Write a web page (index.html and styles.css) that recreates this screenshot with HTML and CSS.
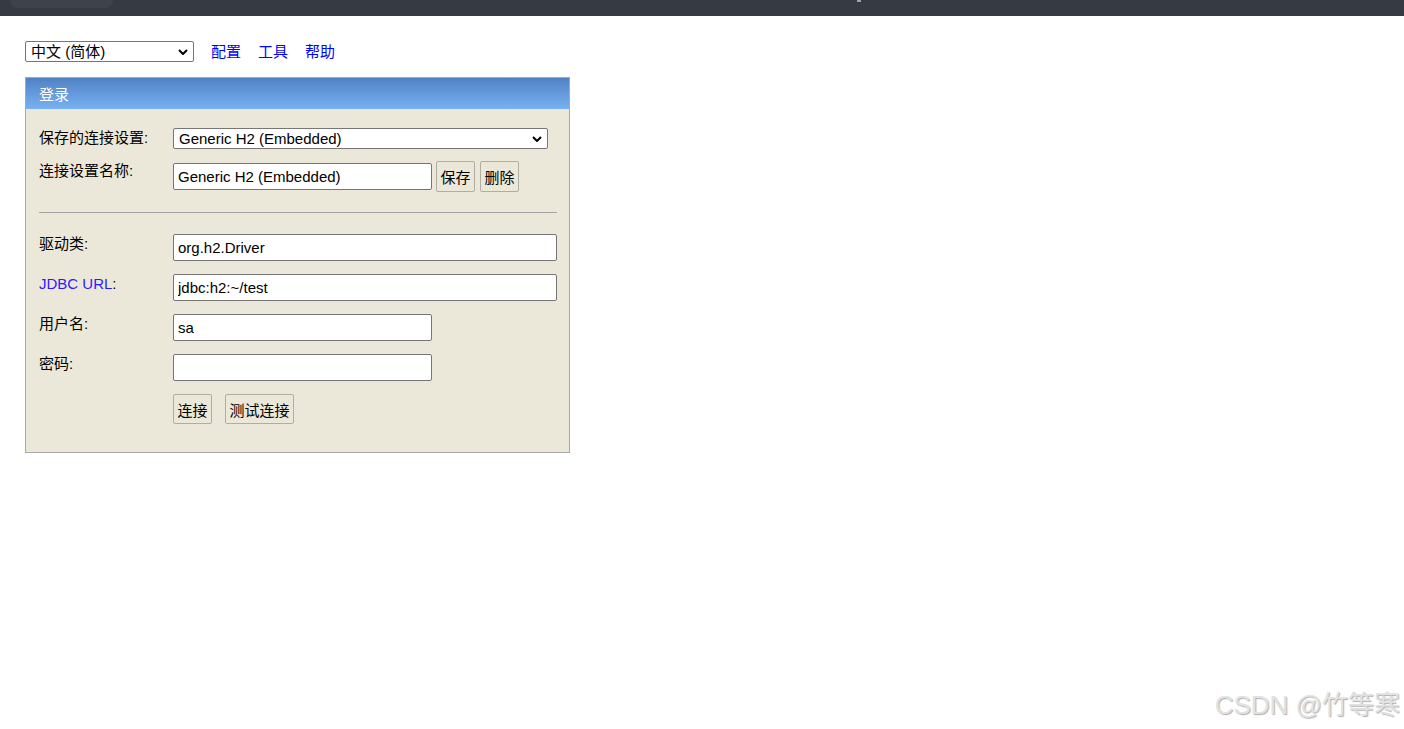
FILE: index.html
```html
<!DOCTYPE html>
<html lang="zh-CN">
<head>
  <meta charset="UTF-8">
  <title>H2 Console</title>
  <link rel="stylesheet" href="styles.css">
</head>
<body>
  <div class="topbar">
    <span class="tab"></span>
    <span class="dot"></span>
  </div>

  <div class="page">
    <div class="toolbar">
      <span class="select-wrap">
        <select class="lang">
          <option>中文 (简体)</option>
          <option>English</option>
        </select>
        <svg class="chev" width="10" height="6" viewBox="0 0 10 6"><path d="M1 1l4 4 4-4" /></svg>
      </span>
      <a href="#">配置</a>
      <a href="#">工具</a>
      <a href="#">帮助</a>
    </div>

    <div class="login">
      <div class="login-head">登录</div>
      <div class="login-body">
        <label class="label">保存的连接设置:</label>
        <span class="select-wrap first">
          <select class="setting">
            <option>Generic H2 (Embedded)</option>
          </select>
          <svg class="chev" width="10" height="6" viewBox="0 0 10 6"><path d="M1 1l4 4 4-4" /></svg>
        </span>

        <label class="label">连接设置名称:</label>
        <div class="name-row">
          <input type="text" class="field short" value="Generic H2 (Embedded)">
          <button class="btn save">保存</button>
          <button class="btn remove">删除</button>
        </div>

        <hr class="divider">

        <label class="label">驱动类:</label>
        <input type="text" class="field long" value="org.h2.Driver">

        <label class="label"><a href="#">JDBC URL</a>:</label>
        <input type="text" class="field long" value="jdbc:h2:~/test">

        <label class="label">用户名:</label>
        <input type="text" class="field short" value="sa">

        <label class="label">密码:</label>
        <input type="password" class="field short" value="">

        <span></span>
        <div class="actions">
          <button class="btn">连接</button>
          <button class="btn">测试连接</button>
        </div>
      </div>
    </div>
  </div>

  <div class="watermark">CSDN @竹等寒</div>
</body>
</html>
```

FILE: styles.css
```css
/* H2 console login page */
body {
  margin: 0;
  font-family: "Liberation Sans", "Noto Sans CJK SC", sans-serif;
  font-size: 15px;
  color: #000;
  background-color: #fff;
}

.topbar {
  display: flex;
  align-items: flex-start;
  height: 16px;
  background-color: #363a43;
}

.topbar .tab {
  margin-left: 10px;
  width: 103px;
  height: 8px;
  background-color: #3e424b;
  border-radius: 0 0 10px 10px;
}

.topbar .dot {
  margin-left: 744px;
  width: 4px;
  height: 2px;
  background-color: #9aa4b0;
}

.page {
  padding: 25px 0 0 25px;
}

.toolbar {
  display: flex;
  align-items: center;
  height: 21px;
}

.toolbar a {
  color: #0000ff;
  text-decoration: none;
  margin-left: 17px;
  line-height: 21px;
}

.toolbar a:first-of-type {
  margin-left: 17px;
}

.select-wrap {
  position: relative;
  display: inline-flex;
}

.select-wrap.first {
  margin-bottom: -1px;
}

select {
  appearance: none;
  font-family: inherit;
  font-size: 15px;
  height: 21px;
  padding: 0 0 0 5px;
  border: 1px solid #767676;
  border-radius: 2px;
  background-color: #fff;
  color: #000;
}

.chev {
  position: absolute;
  right: 6px;
  top: 50%;
  margin-top: -3px;
  pointer-events: none;
}

.chev path {
  fill: none;
  stroke: #000;
  stroke-width: 2;
}

.lang {
  width: 169px;
}

.login {
  width: 545px;
  box-sizing: border-box;
  margin-top: 15px;
  border: 1px solid #a9a9a9;
  background-color: #ece8d9;
}

.login-head {
  height: 30px;
  line-height: 31px;
  padding: 1px 0 0 13px;
  color: #fff;
  background: linear-gradient(#5181c5, #77b2f2);
}

.login-body {
  display: grid;
  grid-template-columns: 134px 384px;
  row-gap: 13px;
  align-items: start;
  justify-items: start;
  padding: 19px 12px 28px 13px;
}

.label {
  line-height: 20px;
}

.label a {
  color: #2a1cff;
  text-decoration: none;
}

.setting {
  width: 375px;
}

.name-row {
  display: flex;
  align-items: center;
  height: 31px;
}

.field {
  box-sizing: border-box;
  height: 27px;
  padding: 0 4px;
  font-family: inherit;
  font-size: 15px;
  border: 1px solid #767676;
  border-radius: 2px;
  background-color: #fff;
  color: #000;
}

.field.short {
  width: 259px;
}

.field.long {
  width: 384px;
}

.btn {
  box-sizing: border-box;
  height: 31px;
  padding: 0 3.5px;
  font-family: inherit;
  font-size: 15px;
  color: #000;
  border: 1px solid #b0ada3;
  border-radius: 2px;
  background-color: #ebe7d9;
}

.btn.save {
  margin-left: 4px;
}

.btn.remove {
  margin-left: 5px;
}

.divider {
  grid-column: 1 / 3;
  width: 518px;
  margin: 7px 0 8px;
  border: 0;
  border-top: 1px solid #a4a4a4;
}

.actions {
  display: flex;
  gap: 13px;
}

.actions .btn {
  height: 30px;
}

.watermark {
  position: absolute;
  top: 684px;
  right: 4px;
  font-size: 26px;
  color: #e2e2e2;
  text-shadow: 1px 1px 1px #b0b0b0;
  white-space: nowrap;
}
```
